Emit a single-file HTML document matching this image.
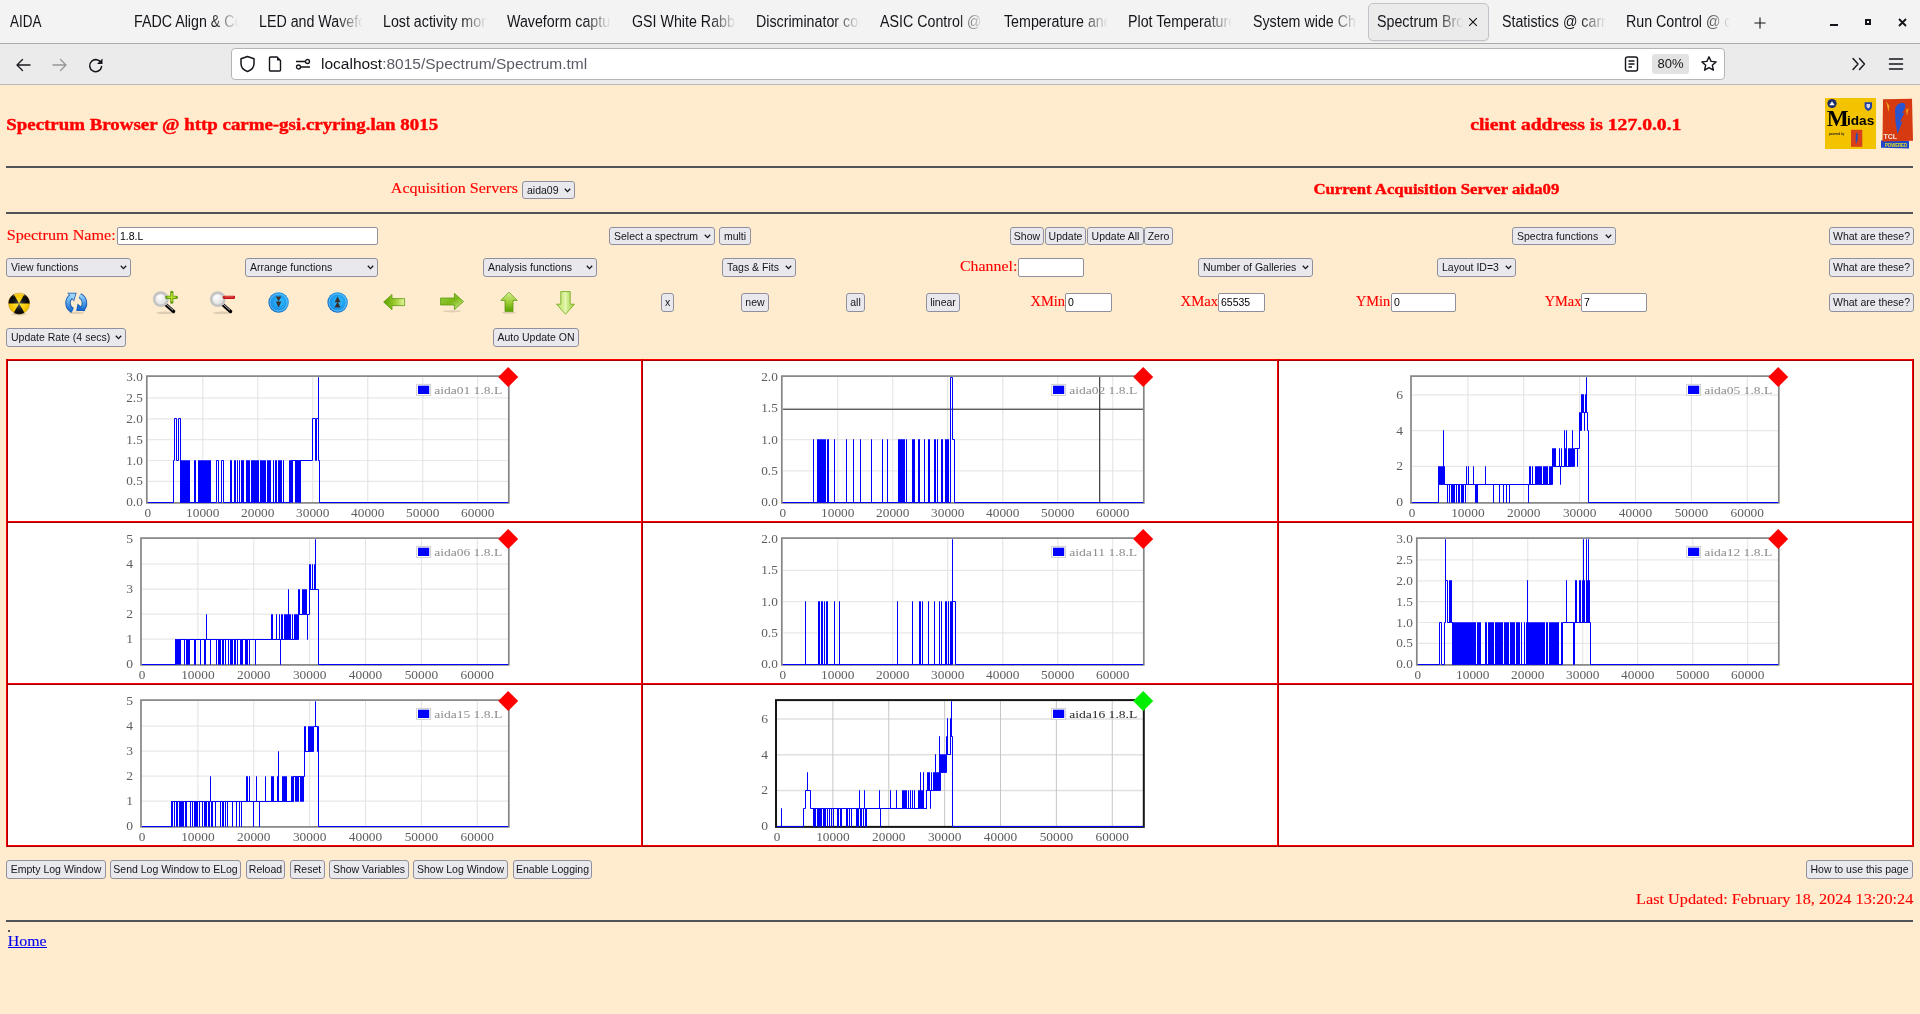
<!DOCTYPE html><html><head><meta charset="utf-8"><title>Spectrum Browser</title><style>
*{box-sizing:border-box;margin:0;padding:0}
html,body{width:1920px;height:1014px;overflow:hidden;background:#ffebcd;font-family:"Liberation Sans",sans-serif}
.a{position:absolute}
#root{position:absolute;left:0;top:0;width:1920px;height:1014px;will-change:transform}
#tabbar{position:absolute;left:0;top:0;width:1920px;height:43px;background:#f3f3f3}
#tabline{position:absolute;left:0;top:43px;width:1920px;height:1px;background:#ababab}
#nav{position:absolute;left:0;top:44px;width:1920px;height:40px;background:#ebebeb}
#navline{position:absolute;left:0;top:84px;width:1920px;height:1px;background:#b7b7b4}
.tab{position:absolute;top:11px;height:22px;font-size:16px;line-height:22px;color:#15141a;white-space:nowrap;overflow:hidden;
 -webkit-mask-image:linear-gradient(to right,#000 0,#000 calc(100% - 26px),transparent 100%);mask-image:linear-gradient(to right,#000 0,#000 calc(100% - 26px),transparent 100%)}
.btn{position:absolute;height:18px;background:#e9e9ed;border:1px solid #8f8f9d;border-radius:3px;font-size:10.5px;line-height:16px;color:#15141a;text-align:center;white-space:nowrap;overflow:hidden}
.sel{position:absolute;height:18px;background:#e9e9ed;border:1px solid #8f8f9d;border-radius:3px;font-size:10.5px;line-height:16px;color:#15141a;white-space:nowrap;overflow:hidden;padding-left:4px}
.sel svg{position:absolute;right:3.5px;top:50%;margin-top:-2.5px}
.inp{position:absolute;height:18px;background:#fff;border:1px solid #8f8f9d;border-radius:2px;font-size:10.5px;line-height:16px;color:#000;padding-left:2px;white-space:nowrap;overflow:hidden}
.lbl{position:absolute;font-family:"Liberation Serif",serif;color:#ff0000;white-space:nowrap}
.hr{position:absolute;left:6px;width:1907px;height:2px;background:#505358}
</style></head><body><div id="root">
<div id="tabbar"></div><div id="tabline"></div><div id="nav"></div><div id="navline"></div>
<div class="a" style="left:10px;top:11px;font-size:16px;line-height:22px;color:#15141a;transform:scaleX(0.84);transform-origin:0 0">AIDA</div>
<div class="tab" style="left:134px;width:104px"><span style="display:inline-block;transform:scaleX(0.89);transform-origin:0 0">FADC Align &amp; Control</span></div>
<div class="tab" style="left:258.7px;width:104px"><span style="display:inline-block;transform:scaleX(0.89);transform-origin:0 0">LED and Waveform</span></div>
<div class="tab" style="left:382.7px;width:104px"><span style="display:inline-block;transform:scaleX(0.89);transform-origin:0 0">Lost activity monitor</span></div>
<div class="tab" style="left:507.3px;width:104px"><span style="display:inline-block;transform:scaleX(0.89);transform-origin:0 0">Waveform capture</span></div>
<div class="tab" style="left:631.7px;width:104px"><span style="display:inline-block;transform:scaleX(0.89);transform-origin:0 0">GSI White Rabbit</span></div>
<div class="tab" style="left:756px;width:104px"><span style="display:inline-block;transform:scaleX(0.89);transform-origin:0 0">Discriminator control</span></div>
<div class="tab" style="left:880px;width:104px"><span style="display:inline-block;transform:scaleX(0.89);transform-origin:0 0">ASIC Control @ carme</span></div>
<div class="tab" style="left:1004.3px;width:104px"><span style="display:inline-block;transform:scaleX(0.89);transform-origin:0 0">Temperature and</span></div>
<div class="tab" style="left:1128.3px;width:104px"><span style="display:inline-block;transform:scaleX(0.89);transform-origin:0 0">Plot Temperature</span></div>
<div class="tab" style="left:1252.7px;width:104px"><span style="display:inline-block;transform:scaleX(0.89);transform-origin:0 0">System wide Checks</span></div>
<div class="tab" style="left:1501.7px;width:104px"><span style="display:inline-block;transform:scaleX(0.89);transform-origin:0 0">Statistics @ carme</span></div>
<div class="tab" style="left:1626px;width:104px"><span style="display:inline-block;transform:scaleX(0.89);transform-origin:0 0">Run Control @ carme</span></div>
<div class="a" style="left:1368px;top:3px;width:121px;height:38px;background:#ebebeb;border:1px solid #c2c2ca;border-radius:5px;box-shadow:0 1px 1px rgba(0,0,0,0.06)"></div>
<div class="tab" style="left:1377px;width:86px"><span style="display:inline-block;transform:scaleX(0.89);transform-origin:0 0">Spectrum Browser</span></div>
<svg class="a" style="left:1467px;top:16px" width="12" height="12" viewBox="0 0 12 12"><path d="M2.2 2.2L9.8 9.8M9.8 2.2L2.2 9.8" stroke="#15141a" stroke-width="1.15"/></svg>
<svg class="a" style="left:1752.5px;top:15.5px" width="14" height="14" viewBox="0 0 14 14"><path d="M7 1.4V12.6M1.4 7H12.6" stroke="#15141a" stroke-width="1.1"/></svg>
<div class="a" style="left:1830px;top:24px;width:8px;height:2px;background:#15141a"></div>
<div class="a" style="left:1865px;top:19px;width:6px;height:6px;border:2px solid #15141a"></div>
<svg class="a" style="left:1896.5px;top:16.5px" width="11" height="11" viewBox="0 0 11 11"><path d="M2 2L9 9M9 2L2 9" stroke="#15141a" stroke-width="1.8"/></svg>
<svg class="a" style="left:14px;top:55.5px" width="18" height="18" viewBox="0 0 18 18"><path d="M16 9H3M8.5 3.5L3 9L8.5 14.5" fill="none" stroke="#1c1b22" stroke-width="1.35" stroke-linecap="round" stroke-linejoin="round"/></svg>
<svg class="a" style="left:51px;top:55.5px" width="18" height="18" viewBox="0 0 18 18"><path d="M2 9H15M9.5 3.5L15 9L9.5 14.5" fill="none" stroke="#96969a" stroke-width="1.3" stroke-linecap="round" stroke-linejoin="round"/></svg>
<svg class="a" style="left:87px;top:56px" width="18" height="18" viewBox="0 0 18 18"><path d="M14.2 7.3A6 6 0 1 0 14.6 10.6" fill="none" stroke="#15141a" stroke-width="1.5" stroke-linecap="round"/><path d="M15.5 2.5V8H10Z" fill="#15141a"/></svg>
<div class="a" style="left:231px;top:48px;width:1494px;height:32px;background:#fff;border:1px solid #b5b5b5;border-radius:4px"></div>
<svg class="a" style="left:239px;top:55px" width="17" height="18" viewBox="0 0 17 18"><path d="M8.5 1.5L15 3.8V8.5C15 12.3 12.2 15.3 8.5 16.5C4.8 15.3 2 12.3 2 8.5V3.8Z" fill="none" stroke="#15141a" stroke-width="1.5" stroke-linejoin="round"/></svg>
<svg class="a" style="left:268px;top:56px" width="14" height="16" viewBox="0 0 14 16"><path d="M2.5 1H9L12.5 4.5V14C12.5 14.5 12 15 11.5 15H2.5C2 15 1.5 14.5 1.5 14V2C1.5 1.5 2 1 2.5 1Z" fill="none" stroke="#15141a" stroke-width="1.4"/><path d="M9 1V4.5H12.5Z" fill="#15141a"/></svg>
<svg class="a" style="left:295px;top:57px" width="16" height="14" viewBox="0 0 16 14"><path d="M1 4.5H10M6 10H15" stroke="#15141a" stroke-width="1.4"/><circle cx="12.5" cy="4.5" r="2" fill="#fff" stroke="#15141a" stroke-width="1.3"/><circle cx="3.5" cy="10" r="2" fill="#fff" stroke="#15141a" stroke-width="1.3"/></svg>
<div class="a" style="left:321px;top:54px;font-size:15.5px;line-height:20px;color:#15141a;white-space:nowrap">localhost<span style="color:#5b5b66">:8015/Spectrum/Spectrum.tml</span></div>
<svg class="a" style="left:1624px;top:56px" width="15" height="16" viewBox="0 0 15 16"><rect x="1.5" y="1" width="12" height="14" rx="2" fill="none" stroke="#15141a" stroke-width="1.4"/><path d="M4.5 5H10.5M4.5 8H10.5M4.5 11H8" stroke="#15141a" stroke-width="1.3"/></svg>
<div class="a" style="left:1652px;top:54px;width:37px;height:20px;background:#e2e2e2;border-radius:3px;font-size:13px;line-height:20px;text-align:center;color:#15141a">80%</div>
<svg class="a" style="left:1700px;top:55px" width="18" height="18" viewBox="0 0 18 18"><path d="M9 1.8L11.1 6.4L16.1 6.9L12.3 10.2L13.4 15.2L9 12.6L4.6 15.2L5.7 10.2L1.9 6.9L6.9 6.4Z" fill="none" stroke="#15141a" stroke-width="1.4" stroke-linejoin="round"/></svg>
<svg class="a" style="left:1851px;top:57px" width="16" height="14" viewBox="0 0 16 14"><path d="M2 1.5L7 7L2 12.5M8.5 1.5L13.5 7L8.5 12.5" fill="none" stroke="#15141a" stroke-width="1.4" stroke-linecap="round" stroke-linejoin="round"/></svg>
<svg class="a" style="left:1888px;top:57px" width="16" height="14" viewBox="0 0 16 14"><path d="M1.5 2H14.5M1.5 7H14.5M1.5 12H14.5" stroke="#15141a" stroke-width="1.5" stroke-linecap="round"/></svg>
<div class="hr" style="top:166px"></div>
<div class="hr" style="top:212px"></div>
<div class="sel" style="left:522px;top:181px;width:53px;">aida09<svg width="7" height="5" viewBox="0 0 7 5"><path d="M0.8 0.8L3.5 3.6L6.2 0.8" fill="none" stroke="#15141a" stroke-width="1.3"/></svg></div>
<div class="inp" style="left:117px;top:227px;width:261px;">1.8.L</div>
<div class="sel" style="left:609px;top:227px;width:106px;">Select a spectrum<svg width="7" height="5" viewBox="0 0 7 5"><path d="M0.8 0.8L3.5 3.6L6.2 0.8" fill="none" stroke="#15141a" stroke-width="1.3"/></svg></div>
<div class="btn" style="left:719px;top:227px;width:32px;">multi</div>
<div class="btn" style="left:1010px;top:227px;width:34px;">Show</div>
<div class="btn" style="left:1045px;top:227px;width:41px;">Update</div>
<div class="btn" style="left:1087px;top:227px;width:57px;">Update All</div>
<div class="btn" style="left:1144px;top:227px;width:29px;">Zero</div>
<div class="sel" style="left:1512px;top:227px;width:104px;">Spectra functions<svg width="7" height="5" viewBox="0 0 7 5"><path d="M0.8 0.8L3.5 3.6L6.2 0.8" fill="none" stroke="#15141a" stroke-width="1.3"/></svg></div>
<div class="btn" style="left:1829px;top:227px;width:85px;">What are these?</div>
<div class="sel" style="left:6px;top:258px;width:125px;height:19px;line-height:17px;">View functions<svg width="7" height="5" viewBox="0 0 7 5"><path d="M0.8 0.8L3.5 3.6L6.2 0.8" fill="none" stroke="#15141a" stroke-width="1.3"/></svg></div>
<div class="sel" style="left:245px;top:258px;width:133px;height:19px;line-height:17px;">Arrange functions<svg width="7" height="5" viewBox="0 0 7 5"><path d="M0.8 0.8L3.5 3.6L6.2 0.8" fill="none" stroke="#15141a" stroke-width="1.3"/></svg></div>
<div class="sel" style="left:483px;top:258px;width:114px;height:19px;line-height:17px;">Analysis functions<svg width="7" height="5" viewBox="0 0 7 5"><path d="M0.8 0.8L3.5 3.6L6.2 0.8" fill="none" stroke="#15141a" stroke-width="1.3"/></svg></div>
<div class="sel" style="left:722px;top:258px;width:74px;height:19px;line-height:17px;">Tags &amp; Fits<svg width="7" height="5" viewBox="0 0 7 5"><path d="M0.8 0.8L3.5 3.6L6.2 0.8" fill="none" stroke="#15141a" stroke-width="1.3"/></svg></div>
<div class="inp" style="left:1018px;top:258px;width:66px;height:19px;line-height:17px;"></div>
<div class="sel" style="left:1198px;top:258px;width:115px;height:19px;line-height:17px;">Number of Galleries<svg width="7" height="5" viewBox="0 0 7 5"><path d="M0.8 0.8L3.5 3.6L6.2 0.8" fill="none" stroke="#15141a" stroke-width="1.3"/></svg></div>
<div class="sel" style="left:1437px;top:258px;width:79px;height:19px;line-height:17px;">Layout ID=3<svg width="7" height="5" viewBox="0 0 7 5"><path d="M0.8 0.8L3.5 3.6L6.2 0.8" fill="none" stroke="#15141a" stroke-width="1.3"/></svg></div>
<div class="btn" style="left:1829px;top:258px;width:85px;height:19px;line-height:17px;">What are these?</div>
<div class="btn" style="left:661px;top:293px;width:13px;height:19px;line-height:17px;">x</div>
<div class="btn" style="left:741px;top:293px;width:28px;height:19px;line-height:17px;">new</div>
<div class="btn" style="left:846px;top:293px;width:19px;height:19px;line-height:17px;">all</div>
<div class="btn" style="left:926px;top:293px;width:34px;height:19px;line-height:17px;">linear</div>
<div class="inp" style="left:1065px;top:293px;width:47px;height:19px;line-height:17px;">0</div>
<div class="inp" style="left:1218px;top:293px;width:47px;height:19px;line-height:17px;">65535</div>
<div class="inp" style="left:1391px;top:293px;width:65px;height:19px;line-height:17px;">0</div>
<div class="inp" style="left:1581px;top:293px;width:66px;height:19px;line-height:17px;">7</div>
<div class="btn" style="left:1829px;top:293px;width:85px;height:19px;line-height:17px;">What are these?</div>
<div class="sel" style="left:6px;top:328px;width:120px;height:19px;line-height:17px;">Update Rate (4 secs)<svg width="7" height="5" viewBox="0 0 7 5"><path d="M0.8 0.8L3.5 3.6L6.2 0.8" fill="none" stroke="#15141a" stroke-width="1.3"/></svg></div>
<div class="btn" style="left:493px;top:328px;width:86px;height:19px;line-height:17px;">Auto Update ON</div>
<div class="btn" style="left:6px;top:860px;width:100px;height:19px;line-height:17px;">Empty Log Window</div>
<div class="btn" style="left:110px;top:860px;width:131px;height:19px;line-height:17px;">Send Log Window to ELog</div>
<div class="btn" style="left:246px;top:860px;width:39px;height:19px;line-height:17px;">Reload</div>
<div class="btn" style="left:290px;top:860px;width:35px;height:19px;line-height:17px;">Reset</div>
<div class="btn" style="left:329px;top:860px;width:80px;height:19px;line-height:17px;">Show Variables</div>
<div class="btn" style="left:413px;top:860px;width:95px;height:19px;line-height:17px;">Show Log Window</div>
<div class="btn" style="left:513px;top:860px;width:79px;height:19px;line-height:17px;">Enable Logging</div>
<div class="btn" style="left:1806px;top:860px;width:107px;height:19px;line-height:17px;">How to use this page</div>
<div class="hr" style="top:920px"></div>
<div class="a" style="left:8px;top:930px;width:2px;height:2px;background:#555"></div>
<div class="a" style="left:8px;top:947px;width:39px;height:1px;background:#0000ee"></div>
<svg class="a" style="left:1825px;top:98px" width="51" height="51" viewBox="0 0 51 51">
<rect width="51" height="51" fill="#f4c300"/>
<circle cx="7" cy="5.5" r="4.6" fill="#1a2a6a"/><path d="M4.3 7.3L7 3.3L9.7 7.3Z" fill="#fff"/>
<path d="M39.6 4.3H47V8.5C47 10.8 45.3 12.2 43.3 12.9C41.3 12.2 39.6 10.8 39.6 8.5Z" fill="#2040a8"/><path d="M41.5 6H45V9L43.3 10.5L41.5 9Z" fill="#d0d8f0"/>
<text x="1.8" y="28.4" font-family="Liberation Serif" font-weight="bold" font-size="22.5" fill="#000" textLength="22" lengthAdjust="spacingAndGlyphs">M</text>
<text x="22" y="26.6" font-family="Liberation Sans" font-weight="bold" font-size="12" fill="#000" textLength="27.3" lengthAdjust="spacingAndGlyphs">idas</text>
<rect x="26" y="31.8" width="11.3" height="17" fill="#d8401a"/><path d="M31.8 34C33.5 36 33 42 31 46C30.2 42 30.5 37 31.8 34Z" fill="#2050c0"/>
<text x="3.9" y="36.8" font-family="Liberation Sans" font-weight="bold" font-size="3.2" fill="#222" textLength="15.4" lengthAdjust="spacingAndGlyphs">powered by</text>
</svg>
<svg class="a" style="left:1880px;top:97px" width="35" height="54" viewBox="0 0 35 54">
<path d="M1 43.6L29 43.8V51.5L1 50.8Z" fill="#1f45c8"/>
<path d="M3 2.2L32 1.8L33 43.7L2.5 44.5Z" fill="#d53a10"/>
<path d="M21 6C25 5 26.5 8 24.5 12.5L22 16L24.5 15.5L20 25L22.5 24.5L17.5 37L15.5 25L15 14C15 10 17 7 21 6Z" fill="#2a55d0"/>
<path d="M6 4L9.5 9L8.5 15Z" fill="#f0a020"/><path d="M26 13L28.5 11L27 19Z" fill="#f0a020"/>
<text x="3.5" y="42" font-family="Liberation Sans" font-weight="bold" font-size="7" fill="#f4e8e0">TCL</text>
<text x="5" y="50" font-family="Liberation Sans" font-weight="bold" font-size="6" fill="#e8e020" textLength="22" lengthAdjust="spacingAndGlyphs">POWERED</text>
</svg>
<svg width="0" height="0" style="position:absolute"><defs>
<radialGradient id="gy" cx="0.5" cy="0.5" r="0.6"><stop offset="0" stop-color="#ffe840"/><stop offset="0.7" stop-color="#f4c400"/><stop offset="1" stop-color="#d09a00"/></radialGradient><radialGradient id="gk" cx="0.5" cy="0.5" r="0.55"><stop offset="0" stop-color="#606060"/><stop offset="0.45" stop-color="#1a1a1a"/><stop offset="1" stop-color="#000"/></radialGradient>
<linearGradient id="gb" x1="0" y1="0" x2="0" y2="1"><stop offset="0" stop-color="#8fd0ff"/><stop offset="1" stop-color="#1a6fd0"/></linearGradient>
<radialGradient id="gbc" cx="0.55" cy="0.45" r="0.6"><stop offset="0" stop-color="#30c0ff"/><stop offset="0.75" stop-color="#1890e8"/><stop offset="1" stop-color="#0a58b0"/></radialGradient><linearGradient id="glh" x1="0" y1="0" x2="1" y2="0"><stop offset="0" stop-color="#5a9e00"/><stop offset="0.55" stop-color="#9ccc30"/><stop offset="1" stop-color="#e4f4a0"/></linearGradient><linearGradient id="grh" x1="0" y1="0" x2="1" y2="1"><stop offset="0" stop-color="#9cd040"/><stop offset="0.5" stop-color="#7cb818"/><stop offset="1" stop-color="#d8f090"/></linearGradient><linearGradient id="guv" x1="0" y1="0" x2="0" y2="1"><stop offset="0" stop-color="#d8f090"/><stop offset="0.55" stop-color="#98cc30"/><stop offset="1" stop-color="#58a000"/></linearGradient><linearGradient id="gdv" x1="0" y1="0" x2="1" y2="0"><stop offset="0" stop-color="#b8e060"/><stop offset="0.5" stop-color="#e0f4a8"/><stop offset="1" stop-color="#98cc38"/></linearGradient>
<linearGradient id="gg" x1="0" y1="0" x2="0" y2="1"><stop offset="0" stop-color="#d8f08a"/><stop offset="0.5" stop-color="#8cc820"/><stop offset="1" stop-color="#5a9a10"/></linearGradient>
<linearGradient id="ggh" x1="0" y1="0" x2="1" y2="0"><stop offset="0" stop-color="#7ab818"/><stop offset="0.5" stop-color="#b8e050"/><stop offset="1" stop-color="#d8f08a"/></linearGradient>
<radialGradient id="glass" cx="0.4" cy="0.35" r="0.7"><stop offset="0" stop-color="#ffffff"/><stop offset="1" stop-color="#d8d8d8"/></radialGradient>
</defs></svg>
<svg class="a" style="left:8px;top:292px" width="23" height="24" viewBox="0 0 23 24"><ellipse cx="11.1" cy="22.2" rx="8" ry="1.3" fill="#000" opacity="0.13"/><circle cx="11.1" cy="11.5" r="10.6" fill="url(#gy)"/><path d="M11.1 11.5L0.50 11.50A10.6 10.6 0 0 1 5.80 2.32ZM11.1 11.5L16.40 2.32A10.6 10.6 0 0 1 21.70 11.50ZM11.1 11.5L16.40 20.68A10.6 10.6 0 0 1 5.80 20.68Z" fill="url(#gk)"/><path d="M5 4.2A8.6 8.6 0 0 1 17.2 4.2" fill="none" stroke="#fff" stroke-width="0.9" opacity="0.45"/><circle cx="11.1" cy="11.5" r="10.6" fill="none" stroke="#a07000" stroke-width="0.5" opacity="0.5"/></svg>
<svg class="a" style="left:64px;top:291px" width="24" height="23" viewBox="0 0 24 23"><ellipse cx="12.5" cy="21.8" rx="8" ry="1.2" fill="#000" opacity="0.12"/><path d="M8.6 19.5A8.3 8.3 0 0 1 7.6 5.2" fill="none" stroke="#1858b0" stroke-width="5.4"/><path d="M15.8 4.6A8.3 8.3 0 0 1 17.6 18.4" fill="none" stroke="#1858b0" stroke-width="5.4"/><path d="M3.3 1.8H12.6L10 10.6Z" fill="#1858b0"/><path d="M13.6 12.6L21.6 20.1H12.2Z" fill="#1858b0"/><path d="M8.6 19.5A8.3 8.3 0 0 1 7.6 5.2" fill="none" stroke="url(#gb)" stroke-width="3.6"/><path d="M15.8 4.6A8.3 8.3 0 0 1 17.6 18.4" fill="none" stroke="url(#gb)" stroke-width="3.6"/><path d="M4.6 2.6H11.6L9.7 8.9Z" fill="#9fd3f6"/><path d="M14.2 13.8L20 19.3H13.2Z" fill="#1a6ed0"/></svg>
<svg class="a" style="left:152px;top:290px" width="26" height="25" viewBox="0 0 26 25"><ellipse cx="13" cy="22.8" rx="9" ry="1.2" fill="#000" opacity="0.13"/><path d="M12.5 13.5L21.5 21.5" stroke="#000" stroke-width="3.4" stroke-linecap="round"/><path d="M13.5 13.6L21 20.3" stroke="#ddd" stroke-width="0.9"/><circle cx="8.8" cy="9.2" r="6.6" fill="url(#glass)" stroke="#c4c4c4" stroke-width="2.6"/><path d="M19.8 2.3V12.2M14.6 7.3H24.4" stroke="#5e9a10" stroke-width="3.2" stroke-linecap="round"/><path d="M19.8 3V11.5M15.3 7.3H23.7" stroke="#b8e030" stroke-width="1.5"/></svg>
<svg class="a" style="left:209px;top:290px" width="26" height="25" viewBox="0 0 26 25"><ellipse cx="13" cy="22.8" rx="9" ry="1.2" fill="#000" opacity="0.13"/><path d="M12.5 13.5L21.5 21.5" stroke="#000" stroke-width="3.4" stroke-linecap="round"/><path d="M13.5 13.6L21 20.3" stroke="#ddd" stroke-width="0.9"/><circle cx="8.8" cy="9.2" r="6.6" fill="url(#glass)" stroke="#c4c4c4" stroke-width="2.6"/><path d="M15.3 7.3H24.8" stroke="#c01818" stroke-width="3.2" stroke-linecap="round"/><path d="M15.6 6.9H24.4" stroke="#f06060" stroke-width="1"/></svg>
<svg class="a" style="left:267px;top:292px" width="23" height="23" viewBox="0 0 23 23"><circle cx="11.6" cy="10.5" r="10.2" fill="url(#gbc)"/><circle cx="11.6" cy="10.5" r="8.6" fill="none" stroke="#a8e4ff" stroke-width="0.7" opacity="0.8"/><path d="M8.8 4.4H14.4L11.6 9.4Z M8.8 9.6H14.4L11.6 15.4Z" fill="#3a3030"/></svg>
<svg class="a" style="left:326px;top:292px" width="23" height="23" viewBox="0 0 23 23"><circle cx="11.6" cy="10.5" r="10.2" fill="url(#gbc)"/><circle cx="11.6" cy="10.5" r="8.6" fill="none" stroke="#a8e4ff" stroke-width="0.7" opacity="0.8"/><path d="M8.6 10.2H14.6L11.6 4.5Z M8.6 15.6H14.6L11.6 9.6Z" fill="#3a3030"/></svg>
<svg class="a" style="left:382px;top:292px" width="24" height="21" viewBox="0 0 24 21"><path d="M1.6 10L10 2.4V6.6H22.6V13.6H10V17.8Z" fill="url(#glh)" stroke="#5a9a10" stroke-width="0.8" stroke-linejoin="round"/></svg>
<svg class="a" style="left:439px;top:292px" width="26" height="21" viewBox="0 0 26 21"><ellipse cx="13" cy="19.3" rx="9" ry="1.1" fill="#000" opacity="0.12"/><path d="M24.5 9.6L15.4 1.3V6H1.6V13H15.4V17.6Z" fill="url(#grh)" stroke="#5a9a10" stroke-width="0.8" stroke-linejoin="round"/></svg>
<svg class="a" style="left:499px;top:291px" width="20" height="23" viewBox="0 0 20 23"><ellipse cx="10" cy="21.6" rx="7" ry="1.1" fill="#000" opacity="0.12"/><path d="M10 1.2L18.2 9.4H14V20.6H6V9.4H1.8Z" fill="url(#guv)" stroke="#5a9a10" stroke-width="0.8" stroke-linejoin="round"/></svg>
<svg class="a" style="left:555px;top:290px" width="21" height="25" viewBox="0 0 21 25"><path d="M10.5 24.2L19.5 14.2H15.2V1.6H5.8V14.2H1.5Z" fill="url(#gdv)" stroke="#6aa818" stroke-width="0.8" stroke-linejoin="round"/><path d="M10.5 2V23" stroke="#f0ffc0" stroke-width="1.2" opacity="0.5"/></svg>
<svg class="a" style="left:0;top:0" width="1920" height="1014" viewBox="0 0 1920 1014"><rect x="6" y="359" width="1908" height="488" fill="#fff"/><rect x="6" y="359" width="1908" height="1" fill="#ff0000"/><rect x="6" y="360" width="1908" height="1" fill="#a80000"/><rect x="6" y="521" width="1908" height="1" fill="#ff0000"/><rect x="6" y="522" width="1908" height="1" fill="#a80000"/><rect x="6" y="683" width="1908" height="1" fill="#ff0000"/><rect x="6" y="684" width="1908" height="1" fill="#a80000"/><rect x="6" y="845" width="1908" height="1" fill="#ff0000"/><rect x="6" y="846" width="1908" height="1" fill="#a80000"/><rect x="6" y="359" width="1" height="488" fill="#ff0000"/><rect x="7" y="359" width="1" height="488" fill="#a80000"/><rect x="641" y="359" width="1" height="488" fill="#ff0000"/><rect x="642" y="359" width="1" height="488" fill="#a80000"/><rect x="1277" y="359" width="1" height="488" fill="#ff0000"/><rect x="1278" y="359" width="1" height="488" fill="#a80000"/><rect x="1912" y="359" width="1" height="488" fill="#ff0000"/><rect x="1913" y="359" width="1" height="488" fill="#a80000"/><line x1="147.8" y1="481.35" x2="508.2" y2="481.35" stroke="#e8e8e8" stroke-width="1.2"/><line x1="147.8" y1="460.5" x2="508.2" y2="460.5" stroke="#e8e8e8" stroke-width="1.2"/><line x1="147.8" y1="439.65" x2="508.2" y2="439.65" stroke="#e8e8e8" stroke-width="1.2"/><line x1="147.8" y1="418.8" x2="508.2" y2="418.8" stroke="#e8e8e8" stroke-width="1.2"/><line x1="147.8" y1="397.95" x2="508.2" y2="397.95" stroke="#e8e8e8" stroke-width="1.2"/><line x1="202.79" y1="377.1" x2="202.79" y2="502.2" stroke="#e2e2e2" stroke-width="1"/><line x1="257.79" y1="377.1" x2="257.79" y2="502.2" stroke="#e2e2e2" stroke-width="1"/><line x1="312.78" y1="377.1" x2="312.78" y2="502.2" stroke="#e2e2e2" stroke-width="1"/><line x1="367.77" y1="377.1" x2="367.77" y2="502.2" stroke="#e2e2e2" stroke-width="1"/><line x1="422.77" y1="377.1" x2="422.77" y2="502.2" stroke="#e2e2e2" stroke-width="1"/><line x1="477.76" y1="377.1" x2="477.76" y2="502.2" stroke="#e2e2e2" stroke-width="1"/><rect x="146.8" y="376.1" width="362" height="126.8" fill="none" stroke="#858585" stroke-width="1.7"/><path d="M147.8 502.5H173.5V460.5H174.5V418.5H176.5V460.5H178.5V418.5H180.5V502.5H180.5V460.5V502.5H181.5V460.5V502.5H182.5V460.5V502.5H183.5V460.5V502.5H184.5V460.5V502.5H185.5V460.5V502.5H186.5V460.5V502.5H187.5V460.5V502.5H188.5V460.5V502.5H189.5V460.5V502.5H194.5V460.5V502.5H195.5V460.5V502.5H198.5V460.5V502.5H199.5V460.5V502.5H200.5V460.5V502.5H201.5V460.5V502.5H202.5V460.5V502.5H203.5V460.5V502.5H204.5V460.5V502.5H205.5V460.5V502.5H206.5V460.5V502.5H207.5V460.5V502.5H208.5V460.5V502.5H209.5V460.5V502.5H210.5V460.5V502.5H216.5V460.5H218.5V502.5H221.5V460.5H223.5V502.5H230.5V460.5V502.5H231.5V460.5V502.5H234.5V460.5V502.5H235.5V460.5V502.5H237.5V460.5V502.5H239.5V460.5V502.5H241.5V460.5V502.5H242.5V460.5V502.5H243.5V460.5V502.5H246.5V460.5V502.5H247.5V460.5V502.5H248.5V460.5V502.5H249.5V460.5V502.5H251.5V460.5V502.5H252.5V460.5V502.5H253.5V460.5V502.5H254.5V460.5V502.5H255.5V460.5V502.5H256.5V460.5V502.5H257.5V460.5V502.5H258.5V460.5V502.5H260.5V460.5V502.5H261.5V460.5V502.5H262.5V460.5V502.5H263.5V460.5V502.5H264.5V460.5V502.5H265.5V460.5V502.5H267.5V460.5V502.5H268.5V460.5V502.5H269.5V460.5V502.5H270.5V460.5V502.5H273.5V460.5V502.5H275.5V460.5V502.5H276.5V460.5V502.5H278.5V460.5V502.5H279.5V460.5V502.5H280.5V460.5V502.5H281.5V460.5V502.5H283.5V460.5V502.5H289.5V460.5V502.5H290.5V460.5H291.5V502.5V460.5H292.5V502.5V460.5H295.5V502.5V460.5H296.5V502.5V460.5H297.5V502.5V460.5H298.5V502.5V460.5H299.5V502.5V460.5H300.5V502.5V460.5H312.5V418.5H315.5V460.5H316.5V418.5H318.5V460.5H318.5V377.5V460.5H319.5V502.5H508.2" fill="none" stroke="#0000ff" stroke-width="1"/><text x="126.2" y="506.2" font-family="Liberation Serif" font-size="11.8" fill="#5e5e5e" textLength="16.6" lengthAdjust="spacingAndGlyphs">0.0</text><text x="126.2" y="485.35" font-family="Liberation Serif" font-size="11.8" fill="#5e5e5e" textLength="16.6" lengthAdjust="spacingAndGlyphs">0.5</text><text x="126.2" y="464.5" font-family="Liberation Serif" font-size="11.8" fill="#5e5e5e" textLength="16.6" lengthAdjust="spacingAndGlyphs">1.0</text><text x="126.2" y="443.65" font-family="Liberation Serif" font-size="11.8" fill="#5e5e5e" textLength="16.6" lengthAdjust="spacingAndGlyphs">1.5</text><text x="126.2" y="422.8" font-family="Liberation Serif" font-size="11.8" fill="#5e5e5e" textLength="16.6" lengthAdjust="spacingAndGlyphs">2.0</text><text x="126.2" y="401.95" font-family="Liberation Serif" font-size="11.8" fill="#5e5e5e" textLength="16.6" lengthAdjust="spacingAndGlyphs">2.5</text><text x="126.2" y="381.1" font-family="Liberation Serif" font-size="11.8" fill="#5e5e5e" textLength="16.6" lengthAdjust="spacingAndGlyphs">3.0</text><text x="144.5" y="517.1" font-family="Liberation Serif" font-size="11.8" fill="#5e5e5e" textLength="6.6" lengthAdjust="spacingAndGlyphs">0</text><text x="186.09" y="517.1" font-family="Liberation Serif" font-size="11.8" fill="#5e5e5e" textLength="33.4" lengthAdjust="spacingAndGlyphs">10000</text><text x="241.09" y="517.1" font-family="Liberation Serif" font-size="11.8" fill="#5e5e5e" textLength="33.4" lengthAdjust="spacingAndGlyphs">20000</text><text x="296.08" y="517.1" font-family="Liberation Serif" font-size="11.8" fill="#5e5e5e" textLength="33.4" lengthAdjust="spacingAndGlyphs">30000</text><text x="351.07" y="517.1" font-family="Liberation Serif" font-size="11.8" fill="#5e5e5e" textLength="33.4" lengthAdjust="spacingAndGlyphs">40000</text><text x="406.07" y="517.1" font-family="Liberation Serif" font-size="11.8" fill="#5e5e5e" textLength="33.4" lengthAdjust="spacingAndGlyphs">50000</text><text x="461.06" y="517.1" font-family="Liberation Serif" font-size="11.8" fill="#5e5e5e" textLength="33.4" lengthAdjust="spacingAndGlyphs">60000</text><rect x="416.6" y="384.4" width="14" height="11" fill="#fff" stroke="#d0d0d0" stroke-width="1"/><rect x="418" y="385.7" width="11.2" height="8.3" fill="#0000ff"/><text x="434.2" y="393.7" font-family="Liberation Serif" font-size="11" fill="#8c8c8c" textLength="68" lengthAdjust="spacingAndGlyphs">aida01 1.8.L</text><path d="M508.2 367.1L518.2 377.1L508.2 387.1L498.2 377.1Z" fill="#ff0000"/><line x1="782.8" y1="470.93" x2="1143.2" y2="470.93" stroke="#e8e8e8" stroke-width="1.2"/><line x1="782.8" y1="439.65" x2="1143.2" y2="439.65" stroke="#e8e8e8" stroke-width="1.2"/><line x1="782.8" y1="408.38" x2="1143.2" y2="408.38" stroke="#e8e8e8" stroke-width="1.2"/><line x1="837.79" y1="377.1" x2="837.79" y2="502.2" stroke="#e2e2e2" stroke-width="1"/><line x1="892.79" y1="377.1" x2="892.79" y2="502.2" stroke="#e2e2e2" stroke-width="1"/><line x1="947.78" y1="377.1" x2="947.78" y2="502.2" stroke="#e2e2e2" stroke-width="1"/><line x1="1002.77" y1="377.1" x2="1002.77" y2="502.2" stroke="#e2e2e2" stroke-width="1"/><line x1="1057.77" y1="377.1" x2="1057.77" y2="502.2" stroke="#e2e2e2" stroke-width="1"/><line x1="1112.76" y1="377.1" x2="1112.76" y2="502.2" stroke="#e2e2e2" stroke-width="1"/><line x1="782.8" y1="409.27" x2="1143.2" y2="409.27" stroke="#2a2a2a" stroke-width="1.1"/><line x1="1099.7" y1="377.1" x2="1099.7" y2="502.2" stroke="#2a2a2a" stroke-width="1.1"/><rect x="781.8" y="376.1" width="362" height="126.8" fill="none" stroke="#858585" stroke-width="1.7"/><path d="M782.8 502.5H813.5V439.5V502.5H817.5V439.5V502.5H818.5V439.5V502.5H819.5V439.5V502.5H820.5V439.5V502.5H821.5V439.5V502.5H822.5V439.5V502.5H823.5V439.5V502.5H824.5V439.5V502.5H825.5V439.5V502.5H827.5V439.5V502.5H828.5V439.5V502.5H834.5V439.5V502.5H846.5V439.5V502.5H853.5V439.5V502.5H860.5V439.5V502.5H871.5V439.5V502.5H882.5V439.5V502.5H887.5V439.5V502.5H898.5V439.5V502.5H899.5V439.5V502.5H900.5V439.5V502.5H901.5V439.5V502.5H902.5V439.5V502.5H903.5V439.5V502.5H904.5V439.5V502.5H906.5V439.5V502.5H912.5V439.5V502.5H913.5V439.5V502.5H914.5V439.5V502.5H918.5V439.5V502.5H919.5V439.5V502.5H924.5V439.5V502.5H928.5V439.5V502.5H929.5V439.5V502.5H934.5V439.5V502.5H935.5V439.5V502.5H937.5V439.5V502.5H941.5V439.5V502.5H942.5V439.5V502.5H945.5V439.5V502.5H946.5V439.5V502.5H947.5V439.5V502.5H948.5V439.5V502.5H950.5V377.5H952.5V439.5H954.5V502.5H1143.2" fill="none" stroke="#0000ff" stroke-width="1"/><text x="761.2" y="506.2" font-family="Liberation Serif" font-size="11.8" fill="#5e5e5e" textLength="16.6" lengthAdjust="spacingAndGlyphs">0.0</text><text x="761.2" y="474.93" font-family="Liberation Serif" font-size="11.8" fill="#5e5e5e" textLength="16.6" lengthAdjust="spacingAndGlyphs">0.5</text><text x="761.2" y="443.65" font-family="Liberation Serif" font-size="11.8" fill="#5e5e5e" textLength="16.6" lengthAdjust="spacingAndGlyphs">1.0</text><text x="761.2" y="412.38" font-family="Liberation Serif" font-size="11.8" fill="#5e5e5e" textLength="16.6" lengthAdjust="spacingAndGlyphs">1.5</text><text x="761.2" y="381.1" font-family="Liberation Serif" font-size="11.8" fill="#5e5e5e" textLength="16.6" lengthAdjust="spacingAndGlyphs">2.0</text><text x="779.5" y="517.1" font-family="Liberation Serif" font-size="11.8" fill="#5e5e5e" textLength="6.6" lengthAdjust="spacingAndGlyphs">0</text><text x="821.09" y="517.1" font-family="Liberation Serif" font-size="11.8" fill="#5e5e5e" textLength="33.4" lengthAdjust="spacingAndGlyphs">10000</text><text x="876.09" y="517.1" font-family="Liberation Serif" font-size="11.8" fill="#5e5e5e" textLength="33.4" lengthAdjust="spacingAndGlyphs">20000</text><text x="931.08" y="517.1" font-family="Liberation Serif" font-size="11.8" fill="#5e5e5e" textLength="33.4" lengthAdjust="spacingAndGlyphs">30000</text><text x="986.07" y="517.1" font-family="Liberation Serif" font-size="11.8" fill="#5e5e5e" textLength="33.4" lengthAdjust="spacingAndGlyphs">40000</text><text x="1041.07" y="517.1" font-family="Liberation Serif" font-size="11.8" fill="#5e5e5e" textLength="33.4" lengthAdjust="spacingAndGlyphs">50000</text><text x="1096.06" y="517.1" font-family="Liberation Serif" font-size="11.8" fill="#5e5e5e" textLength="33.4" lengthAdjust="spacingAndGlyphs">60000</text><rect x="1051.6" y="384.4" width="14" height="11" fill="#fff" stroke="#d0d0d0" stroke-width="1"/><rect x="1053" y="385.7" width="11.2" height="8.3" fill="#0000ff"/><text x="1069.2" y="393.7" font-family="Liberation Serif" font-size="11" fill="#8c8c8c" textLength="68" lengthAdjust="spacingAndGlyphs">aida02 1.8.L</text><path d="M1143.2 367.1L1153.2 377.1L1143.2 387.1L1133.2 377.1Z" fill="#ff0000"/><line x1="1412" y1="466.46" x2="1778.2" y2="466.46" stroke="#e8e8e8" stroke-width="1.2"/><line x1="1412" y1="430.71" x2="1778.2" y2="430.71" stroke="#e8e8e8" stroke-width="1.2"/><line x1="1412" y1="394.97" x2="1778.2" y2="394.97" stroke="#e8e8e8" stroke-width="1.2"/><line x1="1467.88" y1="377.1" x2="1467.88" y2="502.2" stroke="#e2e2e2" stroke-width="1"/><line x1="1523.76" y1="377.1" x2="1523.76" y2="502.2" stroke="#e2e2e2" stroke-width="1"/><line x1="1579.64" y1="377.1" x2="1579.64" y2="502.2" stroke="#e2e2e2" stroke-width="1"/><line x1="1635.51" y1="377.1" x2="1635.51" y2="502.2" stroke="#e2e2e2" stroke-width="1"/><line x1="1691.39" y1="377.1" x2="1691.39" y2="502.2" stroke="#e2e2e2" stroke-width="1"/><line x1="1747.27" y1="377.1" x2="1747.27" y2="502.2" stroke="#e2e2e2" stroke-width="1"/><rect x="1411" y="376.1" width="367.8" height="126.8" fill="none" stroke="#858585" stroke-width="1.7"/><path d="M1412 502.5H1438.5V484.5H1438.5V466.5V484.5H1439.5V466.5V484.5H1440.5V466.5V484.5H1441.5V466.5V484.5H1442.5V466.5V484.5H1443.5V430.5V484.5H1444.5V466.5V484.5H1447.5V502.5V484.5H1449.5V502.5V484.5H1451.5V502.5V484.5H1452.5V502.5V484.5H1453.5V502.5V484.5H1454.5V502.5V484.5H1456.5V502.5V484.5H1458.5V502.5V484.5H1459.5V502.5V484.5H1461.5V502.5V484.5H1462.5V502.5V484.5H1463.5V502.5V484.5H1465.5V502.5V484.5H1466.5V466.5V484.5H1468.5V466.5V484.5H1473.5V466.5V484.5H1475.5V502.5V484.5H1476.5V502.5V484.5H1477.5V502.5V484.5H1485.5V466.5V484.5H1493.5V502.5V484.5H1499.5V502.5V484.5H1503.5V502.5V484.5H1506.5V502.5V484.5H1509.5V502.5V484.5H1528.5V502.5V484.5H1529.5V466.5V484.5H1530.5V466.5V484.5H1532.5V466.5V484.5H1535.5V466.5V484.5H1536.5V466.5V484.5H1537.5V466.5V484.5H1538.5V466.5V484.5H1539.5V466.5V484.5H1540.5V466.5V484.5H1541.5V466.5V484.5H1543.5V466.5V484.5H1544.5V466.5V484.5H1545.5V466.5V484.5H1546.5V466.5V484.5H1547.5V466.5V484.5H1549.5V466.5V484.5H1550.5V466.5V484.5H1551.5V466.5V484.5H1552.5V466.5H1552.5V448.5V466.5H1553.5V448.5V466.5H1554.5V448.5V466.5H1555.5V448.5V466.5H1559.5V448.5V466.5H1560.5V484.5V466.5H1561.5V448.5V466.5H1564.5V430.5V466.5H1565.5V448.5V466.5H1566.5V430.5V466.5H1568.5V448.5V466.5H1569.5V448.5V466.5H1570.5V448.5V466.5H1571.5V448.5V466.5H1572.5V430.5V466.5H1573.5V448.5V466.5H1574.5V448.5H1577.5V466.5V448.5H1579.5V430.5H1579.5V412.5V430.5H1580.5V412.5V430.5H1581.5V412.5H1581.5V394.5V412.5H1582.5V394.5V412.5H1583.5V394.5V412.5H1584.5V430.5V412.5H1585.5V394.5V412.5H1586.5V377.5V412.5H1587.5V430.5H1588.5V502.5H1778.2" fill="none" stroke="#0000ff" stroke-width="1"/><text x="1396.3" y="506.2" font-family="Liberation Serif" font-size="11.8" fill="#5e5e5e" textLength="6.8" lengthAdjust="spacingAndGlyphs">0</text><text x="1396.3" y="470.46" font-family="Liberation Serif" font-size="11.8" fill="#5e5e5e" textLength="6.8" lengthAdjust="spacingAndGlyphs">2</text><text x="1396.3" y="434.71" font-family="Liberation Serif" font-size="11.8" fill="#5e5e5e" textLength="6.8" lengthAdjust="spacingAndGlyphs">4</text><text x="1396.3" y="398.97" font-family="Liberation Serif" font-size="11.8" fill="#5e5e5e" textLength="6.8" lengthAdjust="spacingAndGlyphs">6</text><text x="1408.7" y="517.1" font-family="Liberation Serif" font-size="11.8" fill="#5e5e5e" textLength="6.6" lengthAdjust="spacingAndGlyphs">0</text><text x="1451.18" y="517.1" font-family="Liberation Serif" font-size="11.8" fill="#5e5e5e" textLength="33.4" lengthAdjust="spacingAndGlyphs">10000</text><text x="1507.06" y="517.1" font-family="Liberation Serif" font-size="11.8" fill="#5e5e5e" textLength="33.4" lengthAdjust="spacingAndGlyphs">20000</text><text x="1562.94" y="517.1" font-family="Liberation Serif" font-size="11.8" fill="#5e5e5e" textLength="33.4" lengthAdjust="spacingAndGlyphs">30000</text><text x="1618.81" y="517.1" font-family="Liberation Serif" font-size="11.8" fill="#5e5e5e" textLength="33.4" lengthAdjust="spacingAndGlyphs">40000</text><text x="1674.69" y="517.1" font-family="Liberation Serif" font-size="11.8" fill="#5e5e5e" textLength="33.4" lengthAdjust="spacingAndGlyphs">50000</text><text x="1730.57" y="517.1" font-family="Liberation Serif" font-size="11.8" fill="#5e5e5e" textLength="33.4" lengthAdjust="spacingAndGlyphs">60000</text><rect x="1686.6" y="384.4" width="14" height="11" fill="#fff" stroke="#d0d0d0" stroke-width="1"/><rect x="1688" y="385.7" width="11.2" height="8.3" fill="#0000ff"/><text x="1704.2" y="393.7" font-family="Liberation Serif" font-size="11" fill="#8c8c8c" textLength="68" lengthAdjust="spacingAndGlyphs">aida05 1.8.L</text><path d="M1778.2 367.1L1788.2 377.1L1778.2 387.1L1768.2 377.1Z" fill="#ff0000"/><line x1="142" y1="639.18" x2="508.2" y2="639.18" stroke="#e8e8e8" stroke-width="1.2"/><line x1="142" y1="614.16" x2="508.2" y2="614.16" stroke="#e8e8e8" stroke-width="1.2"/><line x1="142" y1="589.14" x2="508.2" y2="589.14" stroke="#e8e8e8" stroke-width="1.2"/><line x1="142" y1="564.12" x2="508.2" y2="564.12" stroke="#e8e8e8" stroke-width="1.2"/><line x1="197.88" y1="539.1" x2="197.88" y2="664.2" stroke="#e2e2e2" stroke-width="1"/><line x1="253.76" y1="539.1" x2="253.76" y2="664.2" stroke="#e2e2e2" stroke-width="1"/><line x1="309.64" y1="539.1" x2="309.64" y2="664.2" stroke="#e2e2e2" stroke-width="1"/><line x1="365.51" y1="539.1" x2="365.51" y2="664.2" stroke="#e2e2e2" stroke-width="1"/><line x1="421.39" y1="539.1" x2="421.39" y2="664.2" stroke="#e2e2e2" stroke-width="1"/><line x1="477.27" y1="539.1" x2="477.27" y2="664.2" stroke="#e2e2e2" stroke-width="1"/><rect x="141" y="538.1" width="367.8" height="126.8" fill="none" stroke="#858585" stroke-width="1.7"/><path d="M142 664.5H175.5V639.5H175.5V664.5V639.5H176.5V664.5V639.5H177.5V664.5V639.5H178.5V664.5V639.5H179.5V664.5V639.5H180.5V664.5V639.5H184.5V664.5V639.5H186.5V664.5V639.5H187.5V664.5V639.5H188.5V664.5V639.5H189.5V664.5V639.5H194.5V664.5V639.5H195.5V664.5V639.5H200.5V664.5V639.5H204.5V664.5V639.5H205.5V664.5V639.5H206.5V614.5V639.5H210.5V664.5V639.5H216.5V664.5V639.5H218.5V664.5V639.5H219.5V664.5V639.5H220.5V664.5V639.5H222.5V664.5V639.5H223.5V664.5V639.5H225.5V664.5V639.5H228.5V664.5V639.5H230.5V664.5V639.5H231.5V664.5V639.5H232.5V664.5V639.5H234.5V664.5V639.5H235.5V664.5V639.5H237.5V664.5V639.5H240.5V664.5V639.5H241.5V664.5V639.5H242.5V664.5V639.5H245.5V664.5V639.5H246.5V664.5V639.5H247.5V664.5V639.5H249.5V664.5V639.5H255.5V664.5V639.5H271.5V614.5V639.5H272.5V614.5V639.5H276.5V614.5V639.5H279.5V614.5V639.5H280.5V664.5V639.5H281.5V614.5V639.5H282.5V614.5V639.5H284.5V614.5V639.5H285.5V614.5V639.5H286.5V614.5V639.5H287.5V614.5V639.5H288.5V589.5V639.5H289.5V614.5V639.5H290.5V614.5V639.5H292.5V614.5V639.5H294.5V614.5V639.5H295.5V614.5V639.5H296.5V614.5V639.5H297.5V614.5V639.5H298.5V614.5H298.5V589.5V614.5H299.5V589.5V614.5H302.5V589.5V614.5H303.5V589.5V614.5H304.5V589.5V614.5H305.5V589.5V614.5H306.5V589.5V614.5H307.5V639.5V614.5H309.5V589.5H309.5V564.5V589.5H310.5V564.5V589.5H312.5V564.5V589.5H314.5V564.5V589.5H315.5V539.5V589.5H318.5V664.5H508.2" fill="none" stroke="#0000ff" stroke-width="1"/><text x="126.3" y="668.2" font-family="Liberation Serif" font-size="11.8" fill="#5e5e5e" textLength="6.8" lengthAdjust="spacingAndGlyphs">0</text><text x="126.3" y="643.18" font-family="Liberation Serif" font-size="11.8" fill="#5e5e5e" textLength="6.8" lengthAdjust="spacingAndGlyphs">1</text><text x="126.3" y="618.16" font-family="Liberation Serif" font-size="11.8" fill="#5e5e5e" textLength="6.8" lengthAdjust="spacingAndGlyphs">2</text><text x="126.3" y="593.14" font-family="Liberation Serif" font-size="11.8" fill="#5e5e5e" textLength="6.8" lengthAdjust="spacingAndGlyphs">3</text><text x="126.3" y="568.12" font-family="Liberation Serif" font-size="11.8" fill="#5e5e5e" textLength="6.8" lengthAdjust="spacingAndGlyphs">4</text><text x="126.3" y="543.1" font-family="Liberation Serif" font-size="11.8" fill="#5e5e5e" textLength="6.8" lengthAdjust="spacingAndGlyphs">5</text><text x="138.7" y="679.1" font-family="Liberation Serif" font-size="11.8" fill="#5e5e5e" textLength="6.6" lengthAdjust="spacingAndGlyphs">0</text><text x="181.18" y="679.1" font-family="Liberation Serif" font-size="11.8" fill="#5e5e5e" textLength="33.4" lengthAdjust="spacingAndGlyphs">10000</text><text x="237.06" y="679.1" font-family="Liberation Serif" font-size="11.8" fill="#5e5e5e" textLength="33.4" lengthAdjust="spacingAndGlyphs">20000</text><text x="292.94" y="679.1" font-family="Liberation Serif" font-size="11.8" fill="#5e5e5e" textLength="33.4" lengthAdjust="spacingAndGlyphs">30000</text><text x="348.81" y="679.1" font-family="Liberation Serif" font-size="11.8" fill="#5e5e5e" textLength="33.4" lengthAdjust="spacingAndGlyphs">40000</text><text x="404.69" y="679.1" font-family="Liberation Serif" font-size="11.8" fill="#5e5e5e" textLength="33.4" lengthAdjust="spacingAndGlyphs">50000</text><text x="460.57" y="679.1" font-family="Liberation Serif" font-size="11.8" fill="#5e5e5e" textLength="33.4" lengthAdjust="spacingAndGlyphs">60000</text><rect x="416.6" y="546.4" width="14" height="11" fill="#fff" stroke="#d0d0d0" stroke-width="1"/><rect x="418" y="547.7" width="11.2" height="8.3" fill="#0000ff"/><text x="434.2" y="555.7" font-family="Liberation Serif" font-size="11" fill="#8c8c8c" textLength="68" lengthAdjust="spacingAndGlyphs">aida06 1.8.L</text><path d="M508.2 529.1L518.2 539.1L508.2 549.1L498.2 539.1Z" fill="#ff0000"/><line x1="782.8" y1="632.93" x2="1143.2" y2="632.93" stroke="#e8e8e8" stroke-width="1.2"/><line x1="782.8" y1="601.65" x2="1143.2" y2="601.65" stroke="#e8e8e8" stroke-width="1.2"/><line x1="782.8" y1="570.38" x2="1143.2" y2="570.38" stroke="#e8e8e8" stroke-width="1.2"/><line x1="837.79" y1="539.1" x2="837.79" y2="664.2" stroke="#e2e2e2" stroke-width="1"/><line x1="892.79" y1="539.1" x2="892.79" y2="664.2" stroke="#e2e2e2" stroke-width="1"/><line x1="947.78" y1="539.1" x2="947.78" y2="664.2" stroke="#e2e2e2" stroke-width="1"/><line x1="1002.77" y1="539.1" x2="1002.77" y2="664.2" stroke="#e2e2e2" stroke-width="1"/><line x1="1057.77" y1="539.1" x2="1057.77" y2="664.2" stroke="#e2e2e2" stroke-width="1"/><line x1="1112.76" y1="539.1" x2="1112.76" y2="664.2" stroke="#e2e2e2" stroke-width="1"/><rect x="781.8" y="538.1" width="362" height="126.8" fill="none" stroke="#858585" stroke-width="1.7"/><path d="M782.8 664.5H805.5V601.5V664.5H818.5V601.5V664.5H819.5V601.5V664.5H821.5V601.5V664.5H822.5V601.5V664.5H824.5V601.5V664.5H826.5V601.5V664.5H827.5V601.5V664.5H834.5V601.5V664.5H839.5V601.5V664.5H897.5V601.5V664.5H912.5V601.5V664.5H919.5V601.5V664.5H920.5V601.5V664.5H922.5V601.5V664.5H928.5V601.5V664.5H934.5V601.5V664.5H939.5V601.5V664.5H941.5V601.5V664.5H945.5V601.5V664.5H946.5V601.5V664.5H948.5V601.5V664.5H950.5V601.5V664.5H951.5V601.5V664.5H952.5V601.5H952.5V539.5V601.5H955.5V664.5H1143.2" fill="none" stroke="#0000ff" stroke-width="1"/><text x="761.2" y="668.2" font-family="Liberation Serif" font-size="11.8" fill="#5e5e5e" textLength="16.6" lengthAdjust="spacingAndGlyphs">0.0</text><text x="761.2" y="636.93" font-family="Liberation Serif" font-size="11.8" fill="#5e5e5e" textLength="16.6" lengthAdjust="spacingAndGlyphs">0.5</text><text x="761.2" y="605.65" font-family="Liberation Serif" font-size="11.8" fill="#5e5e5e" textLength="16.6" lengthAdjust="spacingAndGlyphs">1.0</text><text x="761.2" y="574.38" font-family="Liberation Serif" font-size="11.8" fill="#5e5e5e" textLength="16.6" lengthAdjust="spacingAndGlyphs">1.5</text><text x="761.2" y="543.1" font-family="Liberation Serif" font-size="11.8" fill="#5e5e5e" textLength="16.6" lengthAdjust="spacingAndGlyphs">2.0</text><text x="779.5" y="679.1" font-family="Liberation Serif" font-size="11.8" fill="#5e5e5e" textLength="6.6" lengthAdjust="spacingAndGlyphs">0</text><text x="821.09" y="679.1" font-family="Liberation Serif" font-size="11.8" fill="#5e5e5e" textLength="33.4" lengthAdjust="spacingAndGlyphs">10000</text><text x="876.09" y="679.1" font-family="Liberation Serif" font-size="11.8" fill="#5e5e5e" textLength="33.4" lengthAdjust="spacingAndGlyphs">20000</text><text x="931.08" y="679.1" font-family="Liberation Serif" font-size="11.8" fill="#5e5e5e" textLength="33.4" lengthAdjust="spacingAndGlyphs">30000</text><text x="986.07" y="679.1" font-family="Liberation Serif" font-size="11.8" fill="#5e5e5e" textLength="33.4" lengthAdjust="spacingAndGlyphs">40000</text><text x="1041.07" y="679.1" font-family="Liberation Serif" font-size="11.8" fill="#5e5e5e" textLength="33.4" lengthAdjust="spacingAndGlyphs">50000</text><text x="1096.06" y="679.1" font-family="Liberation Serif" font-size="11.8" fill="#5e5e5e" textLength="33.4" lengthAdjust="spacingAndGlyphs">60000</text><rect x="1051.6" y="546.4" width="14" height="11" fill="#fff" stroke="#d0d0d0" stroke-width="1"/><rect x="1053" y="547.7" width="11.2" height="8.3" fill="#0000ff"/><text x="1069.2" y="555.7" font-family="Liberation Serif" font-size="11" fill="#8c8c8c" textLength="68" lengthAdjust="spacingAndGlyphs">aida11 1.8.L</text><path d="M1143.2 529.1L1153.2 539.1L1143.2 549.1L1133.2 539.1Z" fill="#ff0000"/><line x1="1417.8" y1="643.35" x2="1778.2" y2="643.35" stroke="#e8e8e8" stroke-width="1.2"/><line x1="1417.8" y1="622.5" x2="1778.2" y2="622.5" stroke="#e8e8e8" stroke-width="1.2"/><line x1="1417.8" y1="601.65" x2="1778.2" y2="601.65" stroke="#e8e8e8" stroke-width="1.2"/><line x1="1417.8" y1="580.8" x2="1778.2" y2="580.8" stroke="#e8e8e8" stroke-width="1.2"/><line x1="1417.8" y1="559.95" x2="1778.2" y2="559.95" stroke="#e8e8e8" stroke-width="1.2"/><line x1="1472.79" y1="539.1" x2="1472.79" y2="664.2" stroke="#e2e2e2" stroke-width="1"/><line x1="1527.79" y1="539.1" x2="1527.79" y2="664.2" stroke="#e2e2e2" stroke-width="1"/><line x1="1582.78" y1="539.1" x2="1582.78" y2="664.2" stroke="#e2e2e2" stroke-width="1"/><line x1="1637.77" y1="539.1" x2="1637.77" y2="664.2" stroke="#e2e2e2" stroke-width="1"/><line x1="1692.77" y1="539.1" x2="1692.77" y2="664.2" stroke="#e2e2e2" stroke-width="1"/><line x1="1747.76" y1="539.1" x2="1747.76" y2="664.2" stroke="#e2e2e2" stroke-width="1"/><rect x="1416.8" y="538.1" width="362" height="126.8" fill="none" stroke="#858585" stroke-width="1.7"/><path d="M1417.8 664.5H1439.5V622.5H1441.5V664.5H1444.5V622.5H1445.5V580.5H1445.5V539.5V580.5H1447.5V622.5H1449.5V580.5V622.5H1450.5V580.5V622.5H1451.5V580.5V622.5H1452.5V664.5H1452.5V622.5V664.5H1453.5V622.5V664.5H1454.5V622.5V664.5H1455.5V622.5V664.5H1456.5V622.5V664.5H1457.5V622.5V664.5H1458.5V622.5V664.5H1459.5V622.5V664.5H1460.5V622.5V664.5H1461.5V622.5V664.5H1462.5V622.5V664.5H1463.5V622.5V664.5H1464.5V622.5V664.5H1465.5V622.5V664.5H1466.5V622.5V664.5H1467.5V622.5V664.5H1468.5V622.5V664.5H1469.5V622.5V664.5H1470.5V622.5V664.5H1471.5V622.5V664.5H1472.5V622.5V664.5H1473.5V622.5V664.5H1474.5V622.5V664.5H1475.5V622.5V664.5H1477.5V622.5V664.5H1478.5V622.5V664.5H1479.5V622.5V664.5H1480.5V622.5V664.5H1485.5V622.5V664.5H1486.5V622.5V664.5H1488.5V622.5V664.5H1489.5V622.5V664.5H1490.5V622.5V664.5H1491.5V622.5V664.5H1492.5V622.5V664.5H1493.5V622.5V664.5H1495.5V622.5V664.5H1496.5V622.5V664.5H1497.5V622.5V664.5H1498.5V622.5V664.5H1499.5V622.5V664.5H1500.5V622.5V664.5H1501.5V622.5V664.5H1502.5V622.5V664.5H1504.5V622.5V664.5H1505.5V622.5V664.5H1506.5V622.5V664.5H1507.5V622.5V664.5H1508.5V622.5V664.5H1510.5V622.5V664.5H1511.5V622.5V664.5H1512.5V622.5V664.5H1513.5V622.5V664.5H1514.5V622.5V664.5H1516.5V622.5V664.5H1517.5V622.5V664.5H1518.5V622.5V664.5H1519.5V622.5V664.5H1521.5V622.5V664.5H1524.5V622.5V664.5H1526.5V622.5V664.5H1527.5V580.5V664.5H1528.5V622.5V664.5H1529.5V622.5V664.5H1530.5V622.5V664.5H1531.5V622.5V664.5H1532.5V622.5V664.5H1533.5V622.5V664.5H1534.5V622.5V664.5H1535.5V622.5V664.5H1536.5V622.5V664.5H1537.5V622.5V664.5H1538.5V622.5V664.5H1539.5V622.5V664.5H1540.5V622.5V664.5H1541.5V622.5V664.5H1542.5V622.5V664.5H1543.5V622.5V664.5H1544.5V622.5V664.5H1546.5V622.5V664.5H1547.5V622.5V664.5H1549.5V622.5V664.5H1550.5V622.5V664.5H1551.5V622.5V664.5H1552.5V622.5V664.5H1553.5V622.5V664.5H1554.5V622.5V664.5H1555.5V622.5V664.5H1556.5V622.5V664.5H1557.5V622.5V664.5H1558.5V622.5V664.5H1561.5V622.5V664.5H1562.5V622.5H1566.5V580.5V622.5H1573.5V664.5V622.5H1574.5V664.5V622.5H1575.5V580.5V622.5H1576.5V580.5V622.5H1579.5V580.5V622.5H1580.5V580.5V622.5H1582.5V580.5V622.5H1583.5V539.5V622.5H1584.5V580.5V622.5H1586.5V539.5V622.5H1587.5V580.5V622.5H1588.5V539.5V622.5H1589.5V580.5V622.5H1590.5V664.5H1778.2" fill="none" stroke="#0000ff" stroke-width="1"/><text x="1396.2" y="668.2" font-family="Liberation Serif" font-size="11.8" fill="#5e5e5e" textLength="16.6" lengthAdjust="spacingAndGlyphs">0.0</text><text x="1396.2" y="647.35" font-family="Liberation Serif" font-size="11.8" fill="#5e5e5e" textLength="16.6" lengthAdjust="spacingAndGlyphs">0.5</text><text x="1396.2" y="626.5" font-family="Liberation Serif" font-size="11.8" fill="#5e5e5e" textLength="16.6" lengthAdjust="spacingAndGlyphs">1.0</text><text x="1396.2" y="605.65" font-family="Liberation Serif" font-size="11.8" fill="#5e5e5e" textLength="16.6" lengthAdjust="spacingAndGlyphs">1.5</text><text x="1396.2" y="584.8" font-family="Liberation Serif" font-size="11.8" fill="#5e5e5e" textLength="16.6" lengthAdjust="spacingAndGlyphs">2.0</text><text x="1396.2" y="563.95" font-family="Liberation Serif" font-size="11.8" fill="#5e5e5e" textLength="16.6" lengthAdjust="spacingAndGlyphs">2.5</text><text x="1396.2" y="543.1" font-family="Liberation Serif" font-size="11.8" fill="#5e5e5e" textLength="16.6" lengthAdjust="spacingAndGlyphs">3.0</text><text x="1414.5" y="679.1" font-family="Liberation Serif" font-size="11.8" fill="#5e5e5e" textLength="6.6" lengthAdjust="spacingAndGlyphs">0</text><text x="1456.09" y="679.1" font-family="Liberation Serif" font-size="11.8" fill="#5e5e5e" textLength="33.4" lengthAdjust="spacingAndGlyphs">10000</text><text x="1511.09" y="679.1" font-family="Liberation Serif" font-size="11.8" fill="#5e5e5e" textLength="33.4" lengthAdjust="spacingAndGlyphs">20000</text><text x="1566.08" y="679.1" font-family="Liberation Serif" font-size="11.8" fill="#5e5e5e" textLength="33.4" lengthAdjust="spacingAndGlyphs">30000</text><text x="1621.07" y="679.1" font-family="Liberation Serif" font-size="11.8" fill="#5e5e5e" textLength="33.4" lengthAdjust="spacingAndGlyphs">40000</text><text x="1676.07" y="679.1" font-family="Liberation Serif" font-size="11.8" fill="#5e5e5e" textLength="33.4" lengthAdjust="spacingAndGlyphs">50000</text><text x="1731.06" y="679.1" font-family="Liberation Serif" font-size="11.8" fill="#5e5e5e" textLength="33.4" lengthAdjust="spacingAndGlyphs">60000</text><rect x="1686.6" y="546.4" width="14" height="11" fill="#fff" stroke="#d0d0d0" stroke-width="1"/><rect x="1688" y="547.7" width="11.2" height="8.3" fill="#0000ff"/><text x="1704.2" y="555.7" font-family="Liberation Serif" font-size="11" fill="#8c8c8c" textLength="68" lengthAdjust="spacingAndGlyphs">aida12 1.8.L</text><path d="M1778.2 529.1L1788.2 539.1L1778.2 549.1L1768.2 539.1Z" fill="#ff0000"/><line x1="142" y1="801.18" x2="508.2" y2="801.18" stroke="#e8e8e8" stroke-width="1.2"/><line x1="142" y1="776.16" x2="508.2" y2="776.16" stroke="#e8e8e8" stroke-width="1.2"/><line x1="142" y1="751.14" x2="508.2" y2="751.14" stroke="#e8e8e8" stroke-width="1.2"/><line x1="142" y1="726.12" x2="508.2" y2="726.12" stroke="#e8e8e8" stroke-width="1.2"/><line x1="197.88" y1="701.1" x2="197.88" y2="826.2" stroke="#e2e2e2" stroke-width="1"/><line x1="253.76" y1="701.1" x2="253.76" y2="826.2" stroke="#e2e2e2" stroke-width="1"/><line x1="309.64" y1="701.1" x2="309.64" y2="826.2" stroke="#e2e2e2" stroke-width="1"/><line x1="365.51" y1="701.1" x2="365.51" y2="826.2" stroke="#e2e2e2" stroke-width="1"/><line x1="421.39" y1="701.1" x2="421.39" y2="826.2" stroke="#e2e2e2" stroke-width="1"/><line x1="477.27" y1="701.1" x2="477.27" y2="826.2" stroke="#e2e2e2" stroke-width="1"/><rect x="141" y="700.1" width="367.8" height="126.8" fill="none" stroke="#858585" stroke-width="1.7"/><path d="M142 826.5H171.5V801.5H171.5V826.5V801.5H172.5V826.5V801.5H174.5V826.5V801.5H176.5V826.5V801.5H177.5V826.5V801.5H179.5V826.5V801.5H180.5V826.5V801.5H181.5V826.5V801.5H182.5V826.5V801.5H183.5V826.5V801.5H185.5V826.5V801.5H186.5V826.5V801.5H190.5V826.5V801.5H192.5V826.5V801.5H194.5V826.5V801.5H195.5V826.5V801.5H196.5V826.5V801.5H197.5V826.5V801.5H199.5V826.5V801.5H202.5V826.5V801.5H204.5V826.5V801.5H205.5V826.5V801.5H206.5V826.5V801.5H208.5V826.5V801.5H209.5V826.5V801.5H210.5V776.5V801.5H211.5V826.5V801.5H212.5V826.5V801.5H215.5V826.5V801.5H220.5V826.5V801.5H222.5V826.5V801.5H223.5V826.5V801.5H225.5V826.5V801.5H227.5V826.5V801.5H232.5V826.5V801.5H236.5V826.5V801.5H239.5V826.5V801.5H241.5V826.5V801.5H246.5V776.5V801.5H247.5V776.5V801.5H249.5V776.5V801.5H253.5V826.5V801.5H256.5V776.5V801.5H259.5V826.5V801.5H265.5V776.5V801.5H271.5V776.5V801.5H272.5V776.5V801.5H273.5V776.5V801.5H277.5V776.5V801.5H278.5V751.5V801.5H282.5V776.5V801.5H283.5V776.5V801.5H284.5V776.5V801.5H285.5V776.5V801.5H286.5V776.5V801.5H291.5V776.5V801.5H292.5V776.5V801.5H293.5V776.5H293.5V801.5V776.5H295.5V801.5V776.5H296.5V801.5V776.5H297.5V801.5V776.5H298.5V801.5V776.5H300.5V801.5V776.5H301.5V801.5V776.5H302.5V801.5V776.5H303.5V801.5V776.5H304.5V751.5H304.5V726.5V751.5H305.5V726.5V751.5H308.5V726.5V751.5H309.5V726.5V751.5H310.5V726.5V751.5H311.5V726.5V751.5H312.5V726.5V751.5H313.5V726.5H315.5V701.5V726.5H317.5V751.5V726.5H318.5V826.5H508.2" fill="none" stroke="#0000ff" stroke-width="1"/><text x="126.3" y="830.2" font-family="Liberation Serif" font-size="11.8" fill="#5e5e5e" textLength="6.8" lengthAdjust="spacingAndGlyphs">0</text><text x="126.3" y="805.18" font-family="Liberation Serif" font-size="11.8" fill="#5e5e5e" textLength="6.8" lengthAdjust="spacingAndGlyphs">1</text><text x="126.3" y="780.16" font-family="Liberation Serif" font-size="11.8" fill="#5e5e5e" textLength="6.8" lengthAdjust="spacingAndGlyphs">2</text><text x="126.3" y="755.14" font-family="Liberation Serif" font-size="11.8" fill="#5e5e5e" textLength="6.8" lengthAdjust="spacingAndGlyphs">3</text><text x="126.3" y="730.12" font-family="Liberation Serif" font-size="11.8" fill="#5e5e5e" textLength="6.8" lengthAdjust="spacingAndGlyphs">4</text><text x="126.3" y="705.1" font-family="Liberation Serif" font-size="11.8" fill="#5e5e5e" textLength="6.8" lengthAdjust="spacingAndGlyphs">5</text><text x="138.7" y="841.1" font-family="Liberation Serif" font-size="11.8" fill="#5e5e5e" textLength="6.6" lengthAdjust="spacingAndGlyphs">0</text><text x="181.18" y="841.1" font-family="Liberation Serif" font-size="11.8" fill="#5e5e5e" textLength="33.4" lengthAdjust="spacingAndGlyphs">10000</text><text x="237.06" y="841.1" font-family="Liberation Serif" font-size="11.8" fill="#5e5e5e" textLength="33.4" lengthAdjust="spacingAndGlyphs">20000</text><text x="292.94" y="841.1" font-family="Liberation Serif" font-size="11.8" fill="#5e5e5e" textLength="33.4" lengthAdjust="spacingAndGlyphs">30000</text><text x="348.81" y="841.1" font-family="Liberation Serif" font-size="11.8" fill="#5e5e5e" textLength="33.4" lengthAdjust="spacingAndGlyphs">40000</text><text x="404.69" y="841.1" font-family="Liberation Serif" font-size="11.8" fill="#5e5e5e" textLength="33.4" lengthAdjust="spacingAndGlyphs">50000</text><text x="460.57" y="841.1" font-family="Liberation Serif" font-size="11.8" fill="#5e5e5e" textLength="33.4" lengthAdjust="spacingAndGlyphs">60000</text><rect x="416.6" y="708.4" width="14" height="11" fill="#fff" stroke="#d0d0d0" stroke-width="1"/><rect x="418" y="709.7" width="11.2" height="8.3" fill="#0000ff"/><text x="434.2" y="717.7" font-family="Liberation Serif" font-size="11" fill="#8c8c8c" textLength="68" lengthAdjust="spacingAndGlyphs">aida15 1.8.L</text><path d="M508.2 691.1L518.2 701.1L508.2 711.1L498.2 701.1Z" fill="#ff0000"/><line x1="777" y1="790.46" x2="1143.2" y2="790.46" stroke="#e0e0e0" stroke-width="1.6"/><line x1="777" y1="754.71" x2="1143.2" y2="754.71" stroke="#e0e0e0" stroke-width="1.6"/><line x1="777" y1="718.97" x2="1143.2" y2="718.97" stroke="#e0e0e0" stroke-width="1.6"/><line x1="832.88" y1="701.1" x2="832.88" y2="826.2" stroke="#c6c6c6" stroke-width="1"/><line x1="888.76" y1="701.1" x2="888.76" y2="826.2" stroke="#c6c6c6" stroke-width="1"/><line x1="944.64" y1="701.1" x2="944.64" y2="826.2" stroke="#c6c6c6" stroke-width="1"/><line x1="1000.51" y1="701.1" x2="1000.51" y2="826.2" stroke="#c6c6c6" stroke-width="1"/><line x1="1056.39" y1="701.1" x2="1056.39" y2="826.2" stroke="#c6c6c6" stroke-width="1"/><line x1="1112.27" y1="701.1" x2="1112.27" y2="826.2" stroke="#c6c6c6" stroke-width="1"/><rect x="776" y="700.1" width="367.8" height="126.8" fill="none" stroke="#161616" stroke-width="2.0"/><path d="M777 826.5H781.5V808.5V826.5H803.5V808.5H805.5V790.5H807.5V772.5V790.5H810.5V808.5H813.5V826.5V808.5H814.5V826.5V808.5H815.5V826.5V808.5H817.5V826.5V808.5H818.5V826.5V808.5H819.5V826.5V808.5H820.5V826.5V808.5H821.5V826.5V808.5H823.5V826.5V808.5H824.5V826.5V808.5H825.5V826.5V808.5H827.5V826.5V808.5H829.5V826.5V808.5H831.5V826.5V808.5H833.5V826.5V808.5H837.5V826.5V808.5H838.5V826.5V808.5H840.5V826.5V808.5H841.5V826.5V808.5H846.5V826.5V808.5H847.5V826.5V808.5H849.5V826.5V808.5H851.5V826.5V808.5H856.5V826.5V808.5H857.5V826.5V808.5H858.5V826.5V808.5H859.5V790.5V808.5H860.5V826.5V808.5H861.5V826.5V808.5H863.5V826.5V808.5H864.5V790.5V808.5H865.5V826.5V808.5H866.5V826.5V808.5H879.5V790.5V808.5H880.5V826.5V808.5H890.5V790.5V808.5H896.5V790.5V808.5H902.5V790.5V808.5H903.5V790.5V808.5H904.5V790.5V808.5H905.5V790.5V808.5H906.5V790.5V808.5H908.5V790.5V808.5H910.5V790.5V808.5H912.5V790.5V808.5H914.5V790.5V808.5H918.5V790.5V808.5H919.5V790.5V808.5H920.5V772.5V808.5H921.5V790.5V808.5H922.5V790.5V808.5H923.5V772.5V808.5H926.5V790.5H926.5V808.5V790.5H927.5V772.5V790.5H928.5V772.5V790.5H929.5V772.5V790.5H930.5V808.5V790.5H931.5V772.5V790.5H933.5V772.5V790.5H934.5V772.5V790.5H935.5V754.5V790.5H936.5V772.5V790.5H937.5V772.5V790.5H938.5V772.5V790.5H939.5V736.5V790.5H940.5V772.5H940.5V754.5V772.5H941.5V754.5V772.5H942.5V754.5V772.5H943.5V754.5V772.5H944.5V754.5V772.5H945.5V754.5V772.5H946.5V754.5H946.5V736.5V754.5H947.5V718.5V754.5H950.5V736.5H950.5V718.5V736.5H951.5V701.5V736.5H952.5V826.5H1143.2" fill="none" stroke="#0000ff" stroke-width="1"/><text x="761.3" y="830.2" font-family="Liberation Serif" font-size="11.8" fill="#5e5e5e" textLength="6.8" lengthAdjust="spacingAndGlyphs">0</text><text x="761.3" y="794.46" font-family="Liberation Serif" font-size="11.8" fill="#5e5e5e" textLength="6.8" lengthAdjust="spacingAndGlyphs">2</text><text x="761.3" y="758.71" font-family="Liberation Serif" font-size="11.8" fill="#5e5e5e" textLength="6.8" lengthAdjust="spacingAndGlyphs">4</text><text x="761.3" y="722.97" font-family="Liberation Serif" font-size="11.8" fill="#5e5e5e" textLength="6.8" lengthAdjust="spacingAndGlyphs">6</text><text x="773.7" y="841.1" font-family="Liberation Serif" font-size="11.8" fill="#5e5e5e" textLength="6.6" lengthAdjust="spacingAndGlyphs">0</text><text x="816.18" y="841.1" font-family="Liberation Serif" font-size="11.8" fill="#5e5e5e" textLength="33.4" lengthAdjust="spacingAndGlyphs">10000</text><text x="872.06" y="841.1" font-family="Liberation Serif" font-size="11.8" fill="#5e5e5e" textLength="33.4" lengthAdjust="spacingAndGlyphs">20000</text><text x="927.94" y="841.1" font-family="Liberation Serif" font-size="11.8" fill="#5e5e5e" textLength="33.4" lengthAdjust="spacingAndGlyphs">30000</text><text x="983.81" y="841.1" font-family="Liberation Serif" font-size="11.8" fill="#5e5e5e" textLength="33.4" lengthAdjust="spacingAndGlyphs">40000</text><text x="1039.69" y="841.1" font-family="Liberation Serif" font-size="11.8" fill="#5e5e5e" textLength="33.4" lengthAdjust="spacingAndGlyphs">50000</text><text x="1095.57" y="841.1" font-family="Liberation Serif" font-size="11.8" fill="#5e5e5e" textLength="33.4" lengthAdjust="spacingAndGlyphs">60000</text><rect x="1051.6" y="708.4" width="14" height="11" fill="#fff" stroke="#d0d0d0" stroke-width="1"/><rect x="1053" y="709.7" width="11.2" height="8.3" fill="#0000ff"/><text x="1069.2" y="717.7" font-family="Liberation Serif" font-size="11" fill="#1e1e1e" textLength="68" lengthAdjust="spacingAndGlyphs">aida16 1.8.L</text><path d="M1143.2 691.1L1153.2 701.1L1143.2 711.1L1133.2 701.1Z" fill="#00ee00"/></svg>
<svg class="a" style="left:0;top:0" width="1920" height="1014"><text x="6.30" y="129.90" font-family="Liberation Serif" font-size="16.8" font-weight="bold" stroke="#ff0000" stroke-width="0.4" fill="#ff0000" textLength="431.80" lengthAdjust="spacingAndGlyphs">Spectrum Browser @ http carme-gsi.cryring.lan 8015</text><text x="1470.20" y="129.90" font-family="Liberation Serif" font-size="16.8" font-weight="bold" stroke="#ff0000" stroke-width="0.4" fill="#ff0000" textLength="211.20" lengthAdjust="spacingAndGlyphs">client address is 127.0.0.1</text><text x="390.85" y="193.20" font-family="Liberation Serif" font-size="15" stroke="#ff0000" stroke-width="0.12" fill="#ff0000" textLength="127.05" lengthAdjust="spacingAndGlyphs">Acquisition Servers</text><text x="1313.45" y="194.00" font-family="Liberation Serif" font-size="15" font-weight="bold" stroke="#ff0000" stroke-width="0.4" fill="#ff0000" textLength="245.85" lengthAdjust="spacingAndGlyphs">Current Acquisition Server aida09</text><text x="6.70" y="239.90" font-family="Liberation Serif" font-size="15" stroke="#ff0000" stroke-width="0.12" fill="#ff0000" textLength="109.10" lengthAdjust="spacingAndGlyphs">Spectrum Name:</text><text x="960.00" y="270.90" font-family="Liberation Serif" font-size="15" stroke="#ff0000" stroke-width="0.12" fill="#ff0000" textLength="57.30" lengthAdjust="spacingAndGlyphs">Channel:</text><text x="1030.50" y="306.00" font-family="Liberation Serif" font-size="15" stroke="#ff0000" stroke-width="0.12" fill="#ff0000" textLength="34.50" lengthAdjust="spacingAndGlyphs">XMin</text><text x="1180.50" y="306.00" font-family="Liberation Serif" font-size="15" stroke="#ff0000" stroke-width="0.12" fill="#ff0000" textLength="37.60" lengthAdjust="spacingAndGlyphs">XMax</text><text x="1355.90" y="306.00" font-family="Liberation Serif" font-size="15" stroke="#ff0000" stroke-width="0.12" fill="#ff0000" textLength="34.25" lengthAdjust="spacingAndGlyphs">YMin</text><text x="1544.70" y="306.00" font-family="Liberation Serif" font-size="15" stroke="#ff0000" stroke-width="0.12" fill="#ff0000" textLength="36.70" lengthAdjust="spacingAndGlyphs">YMax</text><text x="1636.00" y="903.60" font-family="Liberation Serif" font-size="14.6" stroke="#ff0000" stroke-width="0.12" fill="#ff0000" textLength="277.40" lengthAdjust="spacingAndGlyphs">Last Updated: February 18, 2024 13:20:24</text><text x="7.70" y="945.80" font-family="Liberation Serif" font-size="15" stroke="#0000ee" stroke-width="0.12" fill="#0000ee" textLength="38.90" lengthAdjust="spacingAndGlyphs">Home</text></svg>
</div></body></html>
